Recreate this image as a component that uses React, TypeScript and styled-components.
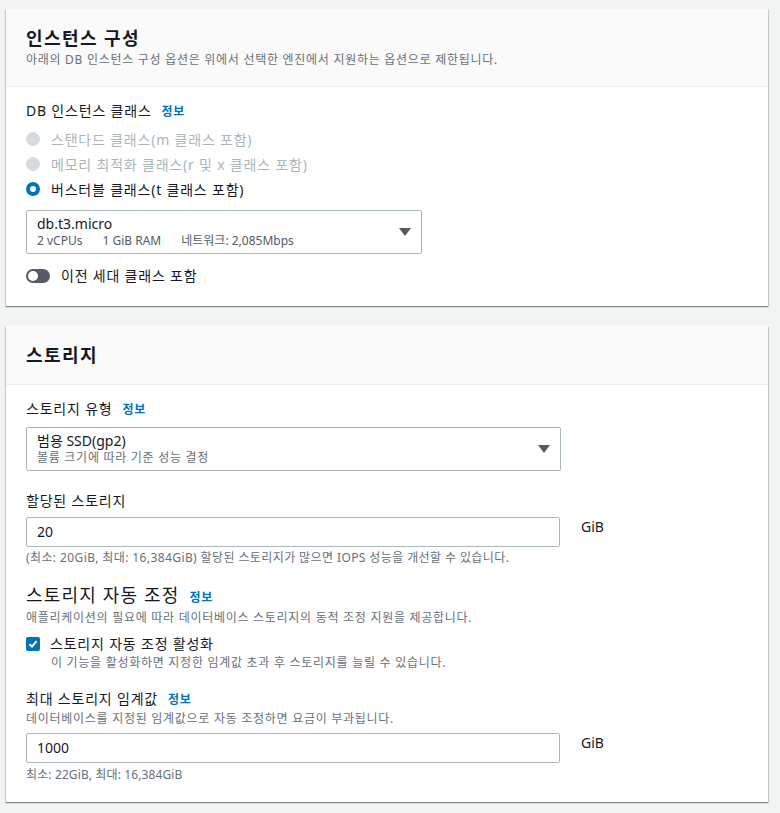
import React from 'react';
import styled, { createGlobalStyle } from 'styled-components';

const GlobalStyle = createGlobalStyle`
  body {
    margin: 0;
    background: #f2f3f3;
    font-family: 'Noto Sans', 'Noto Sans CJK KR', sans-serif;
    letter-spacing: 0.05em;
    color: #16191f;
  }
`;

const Page = styled.div`
  display: flex;
  flex-direction: column;
  gap: 20px;
  padding: 9px 12px 12px 6px;
`;

const Card = styled.section`
  background: #fff;
  box-shadow: 0 1px 1px 0 rgba(0, 28, 36, 0.3), 1px 1px 1px 0 rgba(0, 28, 36, 0.15),
    -1px 1px 1px 0 rgba(0, 28, 36, 0.15);
`;

const CardHeader = styled.header`
  background: #fafafa;
  border-bottom: 1px solid #eaeded;
  padding: 17px 20px 17px;
`;

const CardTitle = styled.h2`
  margin: 0;
  font-size: 18px;
  line-height: 24px;
  font-weight: 700;
  letter-spacing: 0.08em;
`;

const CardDescription = styled.p`
  margin: 1px 0 0;
  font-size: 12px;
  line-height: 18px;
  color: #687078;
  letter-spacing: 0.06em;
`;

const CardBody = styled.div`
  padding: 13px 20px 19px;
`;

const Label = styled.div<{ $mt?: number }>`
  font-size: 14px;
  line-height: 22px;
  margin-top: ${p => p.$mt ?? 0}px;
`;

const InfoLink = styled.a`
  color: #0073bb;
  font-size: 12px;
  font-weight: 700;
  margin-left: 10px;
  letter-spacing: 0.06em;
  text-decoration: none;
`;

const RadioGroup = styled.div`
  display: flex;
  flex-direction: column;
  margin-top: 3px;
`;

const RadioRow = styled.label<{ $disabled?: boolean }>`
  display: flex;
  align-items: center;
  height: 25px;
  font-size: 14px;
  color: ${p => (p.$disabled ? '#aab7b8' : '#16191f')};
`;

const RadioDot = styled.span<{ $checked?: boolean; $disabled?: boolean }>`
  width: 14px;
  height: 14px;
  border-radius: 50%;
  box-sizing: border-box;
  margin-right: 11px;
  flex-shrink: 0;
  background: ${p => (p.$disabled ? '#d5dbdb' : '#fff')};
  border: ${p => (p.$checked ? '4px solid #0073bb' : p.$disabled ? '1px solid #d5dbdb' : '2px solid #687078')};
`;

const SelectBox = styled.div<{ $width: number; $mt?: number }>`
  width: ${p => p.$width}px;
  box-sizing: border-box;
  border: 1px solid #aab7b8;
  border-radius: 2px;
  padding: 4px 10px 4px 10px;
  margin-top: ${p => p.$mt ?? 0}px;
  display: flex;
  align-items: center;
  justify-content: space-between;
`;

const SelectText = styled.div`
  display: flex;
  flex-direction: column;
`;

const SelectValue = styled.span`
  font-size: 14px;
  line-height: 18px;
  letter-spacing: 0;
`;

const SelectMeta = styled.span`
  display: flex;
  gap: 20px;
  font-size: 12px;
  line-height: 16px;
  color: #545b64;
  letter-spacing: 0;
`;

const SelectHint = styled.span`
  font-size: 12px;
  line-height: 16px;
  color: #687078;
  letter-spacing: 0.06em;
`;

const ToggleRow = styled.label`
  display: flex;
  align-items: center;
  margin-top: 11px;
  font-size: 14px;
  line-height: 22px;
`;

const ToggleTrack = styled.span`
  position: relative;
  width: 24px;
  height: 14px;
  border-radius: 7px;
  background: #545b64;
  margin-right: 11px;
`;

const ToggleKnob = styled.span`
  position: absolute;
  left: 2px;
  top: 2px;
  width: 10px;
  height: 10px;
  border-radius: 50%;
  background: #fff;
`;

const InputRow = styled.div<{ $mt?: number }>`
  display: flex;
  align-items: flex-start;
  gap: 21px;
  margin-top: ${p => p.$mt ?? 0}px;
`;

const TextInput = styled.div`
  width: 534px;
  height: 30px;
  box-sizing: border-box;
  border: 1px solid #aab7b8;
  border-radius: 2px;
  padding: 0 10px;
  font-size: 14px;
  line-height: 28px;
  letter-spacing: 0;
`;

const Unit = styled.span`
  font-size: 14px;
  line-height: 20px;
  letter-spacing: 0;
`;

const Help = styled.div<{ $mt?: number; $ls?: number }>`
  font-size: 12px;
  line-height: 16px;
  color: #687078;
  letter-spacing: ${p => p.$ls ?? 0.06}em;
  margin-top: ${p => p.$mt ?? 0}px;
`;

const SubHeading = styled.h3`
  margin: 17px 0 0;
  font-size: 18px;
  font-weight: 400;
  line-height: 24px;
  letter-spacing: 0.065em;
`;

const CheckRow = styled.label`
  display: flex;
  align-items: center;
  margin-top: 7px;
  font-size: 14px;
  line-height: 22px;
`;

const CheckBox = styled.span`
  width: 14px;
  height: 14px;
  border-radius: 2px;
  background: #0073bb;
  margin-right: 10px;
  display: flex;
  align-items: center;
  justify-content: center;
`;

const CheckHint = styled(Help)`
  padding-left: 25px;
`;

const Arrow = () => (
  <svg width="12" height="8" viewBox="0 0 12 8">
    <path d="M0 0h12L6 8z" fill="#545b64" />
  </svg>
);

const App: React.FC = () => (
  <>
    <GlobalStyle />
    <Page>
      <Card>
        <CardHeader>
          <CardTitle>인스턴스 구성</CardTitle>
          <CardDescription>아래의 DB 인스턴스 구성 옵션은 위에서 선택한 엔진에서 지원하는 옵션으로 제한됩니다.</CardDescription>
        </CardHeader>
        <CardBody>
          <Label>
            DB 인스턴스 클래스<InfoLink>정보</InfoLink>
          </Label>
          <RadioGroup>
            <RadioRow $disabled>
              <RadioDot $disabled />
              스탠다드 클래스(m 클래스 포함)
            </RadioRow>
            <RadioRow $disabled>
              <RadioDot $disabled />
              메모리 최적화 클래스(r 및 x 클래스 포함)
            </RadioRow>
            <RadioRow>
              <RadioDot $checked />
              버스터블 클래스(t 클래스 포함)
            </RadioRow>
          </RadioGroup>
          <SelectBox $width={396} $mt={9}>
            <SelectText>
              <SelectValue>db.t3.micro</SelectValue>
              <SelectMeta>
                <span>2 vCPUs</span>
                <span>1 GiB RAM</span>
                <span>네트워크: 2,085Mbps</span>
              </SelectMeta>
            </SelectText>
            <Arrow />
          </SelectBox>
          <ToggleRow>
            <ToggleTrack>
              <ToggleKnob />
            </ToggleTrack>
            이전 세대 클래스 포함
          </ToggleRow>
        </CardBody>
      </Card>

      <Card>
        <CardHeader>
          <CardTitle>스토리지</CardTitle>
        </CardHeader>
        <CardBody>
          <Label>
            스토리지 유형<InfoLink>정보</InfoLink>
          </Label>
          <SelectBox $width={535} $mt={6}>
            <SelectText>
              <SelectValue>범용 SSD(gp2)</SelectValue>
              <SelectHint>볼륨 크기에 따라 기준 성능 결정</SelectHint>
            </SelectText>
            <Arrow />
          </SelectBox>
          <Label $mt={19}>할당된 스토리지</Label>
          <InputRow $mt={5}>
            <TextInput>20</TextInput>
            <Unit>GiB</Unit>
          </InputRow>
          <Help $mt={3} $ls={0.033}>
            (최소: 20GiB, 최대: 16,384GiB) 할당된 스토리지가 많으면 IOPS 성능을 개선할 수 있습니다.
          </Help>
          <SubHeading>
            스토리지 자동 조정<InfoLink>정보</InfoLink>
          </SubHeading>
          <Help>애플리케이션의 필요에 따라 데이터베이스 스토리지의 동적 조정 지원을 제공합니다.</Help>
          <CheckRow>
            <CheckBox>
              <svg width="10" height="10" viewBox="0 0 10 10">
                <path d="M1.5 5.2 4 7.6 8.6 2.2" stroke="#fff" strokeWidth="2" fill="none" />
              </svg>
            </CheckBox>
            스토리지 자동 조정 활성화
          </CheckRow>
          <CheckHint>이 기능을 활성화하면 지정한 임계값 초과 후 스토리지를 늘릴 수 있습니다.</CheckHint>
          <Label $mt={17}>
            최대 스토리지 임계값<InfoLink>정보</InfoLink>
          </Label>
          <Help>데이터베이스를 지정된 임계값으로 자동 조정하면 요금이 부과됩니다.</Help>
          <InputRow $mt={6}>
            <TextInput>1000</TextInput>
            <Unit>GiB</Unit>
          </InputRow>
          <Help $mt={4} $ls={0.01}>
            최소: 22GiB, 최대: 16,384GiB
          </Help>
        </CardBody>
      </Card>
    </Page>
  </>
);

export default App;
